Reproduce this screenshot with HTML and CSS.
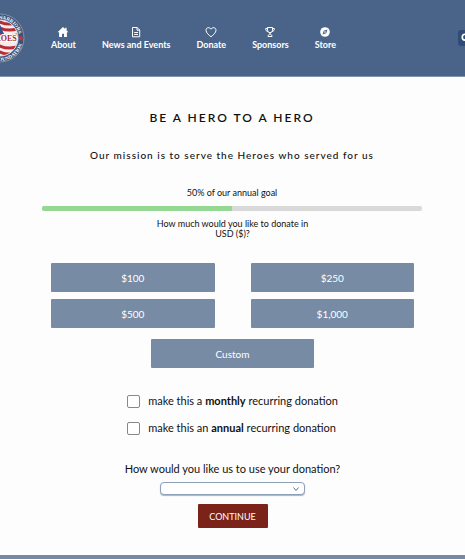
FILE: index.html
```html
<!DOCTYPE html>
<html lang="en">
<head>
<meta charset="utf-8">
<meta name="viewport" content="width=device-width, initial-scale=1">
<title>Be a hero to a hero</title>
<link rel="stylesheet" href="styles.css">
</head>
<body>
<header class="site-header">
  <a class="logo" href="#" aria-label="Home">
    <svg viewBox="0 0 50 50" width="50" height="50">
      <defs>
        <clipPath id="flag"><circle cx="25" cy="25" r="18"/></clipPath>
        <path id="arc-top" d="M6 25a19 19 0 0 1 38 0"/>
        <path id="arc-bottom" d="M2 25a23 23 0 0 0 46 0"/>
      </defs>
      <circle cx="25" cy="25" r="24" fill="#3c5274" stroke="#8093ad"/>
      <g clip-path="url(#flag)">
        <path fill="#f3eeee" d="M0 0h50v50H0z"/>
        <path fill="none" stroke="#b82c35" stroke-width="3" d="M4 11q12-6 21-2t21 0M4 17q12-6 21-2t21 0M4 23q12-6 21-2t21 0M4 35q12-6 21-2t21 0M4 41q12-6 21-2t21 0"/>
        <path fill="#2f5291" d="M5 5h17l7 16H5z"/>
      </g>
      <circle cx="25" cy="25" r="18" fill="none" stroke="#d8dce4"/>
      <text class="logo-name" x="25" y="28" text-anchor="middle">HEROES</text>
      <text class="logo-ring"><textPath href="#arc-top" startOffset="93%" text-anchor="end">WARRIORS</textPath></text>
      <text class="logo-ring"><textPath href="#arc-bottom" startOffset="91%" text-anchor="end">FOUNDATION</textPath></text>
      <path fill="#d5303a" d="m46 22 .9 2h2l-1.5 1.5.6 2.2-2-1.2-2 1.2.6-2.2L43.100 24h2z"/>
    </svg>
  </a>
  <nav class="nav" aria-label="Main">
    <a href="#"><svg viewBox="0 0 12 12"><path class="solid" d="M6 1 .5 6.2h1.6V11H5V7.8h2V11h2.9V6.2h1.6L9.6 4.4V1.8H8.2v1.3z"/></svg>About</a>
    <a href="#"><svg viewBox="0 0 12 12"><path d="M2.5 1.5h4.7L9.7 4v6.8H2.5zM7 1.5v2.7h2.7M4.2 6.5H8M4.2 8.5H8"/></svg>News and Events</a>
    <a href="#"><svg viewBox="0 0 12 12"><path d="M6 10.8C3.8 8.9 1 7 1 4.2 1 1.3 4.7.8 6 3.2 7.3.8 11 1.3 11 4.2 11 7 8.2 8.9 6 10.8z"/></svg>Donate</a>
    <a href="#"><svg viewBox="0 0 12 12"><path d="M3.5 1.5h5v2.7a2.5 2.5 0 0 1-5 0zM3.5 2.5H1.7c0 2 .8 3 2.2 3M8.5 2.5h1.8c0 2-.8 3-2.2 3M6 6.8V8M4 10.5c0-3 4-3 4 0z"/></svg>Sponsors</a>
    <a href="#"><svg viewBox="0 0 12 12"><circle class="solid" cx="6" cy="6" r="4.8"/><path class="cut" d="M8.5 3.5 7.3 7.3 3.5 8.5l1.2-3.8z"/><circle class="solid" cx="6" cy="6" r=".8"/></svg>Store</a>
  </nav>
  <button class="search" type="button" aria-label="Search"><svg viewBox="0 0 12 12"><circle cx="5" cy="5" r="3.5"/><path d="m8 8 3 3"/></svg></button>
</header>
<main class="page">
  <h1>BE A HERO TO A HERO</h1>
  <p class="mission">Our mission is to serve the Heroes who served for us</p>
  <label class="goal" for="goal">50% of our annual goal</label>
  <progress id="goal" max="100" value="50">50%</progress>
  <form class="donate">
    <p class="ask">How much would you like to donate in USD ($)?</p>
    <div class="amounts">
      <button type="button">$100</button>
      <button type="button">$250</button>
      <button type="button">$500</button>
      <button type="button">$1,000</button>
    </div>
    <button class="custom" type="button">Custom</button>
    <div class="recurring">
      <label><input type="checkbox"><span>make this a <b>monthly</b> recurring donation</span></label>
      <label><input type="checkbox"><span>make this an <b>annual</b> recurring donation</span></label>
    </div>
    <label class="use" for="use">How would you like us to use your donation?</label>
    <div class="picker">
      <select id="use"><option></option></select>
      <svg viewBox="0 0 8 8"><path d="m1.5 2.5 2.5 3 2.5-3"/></svg>
    </div>
    <button class="continue" type="submit">CONTINUE</button>
  </form>
</main>
<footer class="site-footer"></footer>
</body>
</html>
```

FILE: styles.css
```css
* { box-sizing: border-box; }

body {
  margin: 0;
  min-height: 100vh;
  display: flex;
  flex-direction: column;
  background: #fdfdfd;
  color: #111;
  font-family: Lato, "Liberation Sans", sans-serif;
  font-size: 11px;
}

h1, p { margin: 0; }
button { border: 0; padding: 0; font: inherit; color: #fff; }

.site-header {
  display: flex;
  align-items: center;
  height: 77px;
  overflow: hidden;
  background: #4a6489;
  border-bottom: 1px solid #8194af;
}

.logo { flex: none; margin-left: -25px; height: 50px; }
.logo svg { display: block; }
.logo-name { font: bold 8px "Liberation Serif", serif; fill: #a82734; stroke: #fff; stroke-width: 2px; paint-order: stroke; }
.logo-ring { font: bold 5px "Liberation Serif", serif; fill: #fff; }

.nav { display: flex; gap: 26px; margin-left: 26px; }
.nav a {
  display: flex;
  flex-direction: column;
  align-items: center;
  gap: 1px;
  color: #fff;
  font-size: 9px;
  font-weight: 700;
  line-height: 12px;
  text-decoration: none;
  white-space: nowrap;
}
.nav svg { width: 12px; height: 12px; fill: none; stroke: #fff; stroke-width: 1; }
.nav .solid { fill: #fff; stroke: none; }
.nav .cut { fill: #4a6489; stroke: none; }

.search {
  flex: none;
  width: 24px;
  height: 16px;
  margin: 0 -17px 0 auto;
  padding-left: 3px;
  text-align: left;
  border-radius: 3px;
  background: #2f4c77;
}
.search svg { display: block; width: 10px; height: 10px; fill: none; stroke: #fff; stroke-width: 2; }

.page {
  flex: 1;
  display: flex;
  flex-direction: column;
  align-items: center;
  padding: 32px 43px 27px 42px;
  text-align: center;
}
h1 { font-size: 12px; font-weight: 600; line-height: 18px; letter-spacing: 2px; }
.mission { margin-top: 21px; font-size: 10px; font-weight: 500; line-height: 14px; letter-spacing: 1px; }
.goal { margin-top: 25px; font-size: 9px; line-height: 12px; }

progress {
  appearance: none;
  width: 100%;
  height: 5px;
  margin-top: 7px;
  border: 0;
}
progress::-webkit-progress-bar { background: #d9d9d9; border-radius: 2px; }
progress::-webkit-progress-value { background: #95d893; border-radius: 2px 0 0 2px; }

.donate { display: flex; flex-direction: column; align-items: center; width: 100%; padding: 0 8px 0 9px; }
.ask { max-width: 160px; margin-top: 8px; font-size: 9px; line-height: 10px; }
.amounts { display: grid; grid-template-columns: 1fr 1fr; gap: 7px 36px; width: 100%; margin-top: 24px; }
.amounts button, .custom { height: 29px; border-radius: 1px; background: #778ba4; font-size: 10px; }
.custom { width: 45%; margin-top: 11px; }

.recurring { display: flex; flex-direction: column; gap: 13px; margin-top: 26px; }
.recurring label { display: flex; align-items: center; gap: 8px; line-height: 14px; }
.recurring input { appearance: none; width: 13px; height: 13px; margin: 0; border: 1px solid #888; border-radius: 2px; background: #fff; }

.use { margin-top: 27px; line-height: 14px; }
.picker { position: relative; width: 40%; margin-top: 6px; }
.picker select {
  appearance: none;
  display: block;
  width: 100%;
  height: 13px;
  border: 1px solid #8da0b8;
  border-radius: 4px;
  background: #fff;
  box-shadow: 0 1px 1px #a9b4c2;
}
.picker svg { position: absolute; top: 3px; right: 5px; width: 8px; height: 8px; fill: none; stroke: #5870a0; pointer-events: none; }
.continue { width: 70px; height: 24px; margin-top: 9px; border-radius: 1px; background: #7b2318; font-size: 9px; }

.site-footer { height: 4px; background: #768aa5; }
```
